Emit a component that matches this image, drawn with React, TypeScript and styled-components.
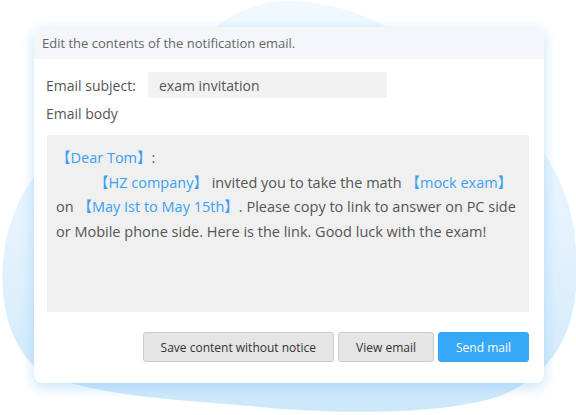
import React from 'react';
import styled, { createGlobalStyle } from 'styled-components';

const GlobalStyle = createGlobalStyle`
  html, body {
    margin: 0;
    padding: 0;
    background: #ffffff;
  }
  body {
    font-family: "Open Sans", "Noto Sans CJK SC", sans-serif;
  }
`

const Stage = styled.div`
  position: relative;
  width: 576px;
  height: 415px;
  overflow: hidden;
  padding: 27px 0 0 34px;
  box-sizing: border-box;
`

const Blob = styled.svg`
  position: absolute;
  left: 0;
  top: 0;
  z-index: 0;
`

const Card = styled.div`
  position: relative;
  z-index: 1;
  width: 510px;
  height: 356px;
  background: #ffffff;
  border-radius: 8px;
  box-shadow: 0 4px 14px rgba(110, 185, 245, 0.4);
  display: flex;
  flex-direction: column;
  overflow: hidden;
`

const Header = styled.div`
  height: 32px;
  display: flex;
  align-items: center;
  padding-left: 8px;
  background: #f4f6f9;
  color: #666666;
  font-size: 13px;
`

const Content = styled.div`
  display: flex;
  flex-direction: column;
  padding: 13px 15px 0 12px;
`

const Row = styled.div`
  display: flex;
  align-items: center;
  height: 26px;
`

const Label = styled.span`
  color: #555555;
  font-size: 14px;
  width: 102px;
`

const SubjectBox = styled.div`
  width: 239px;
  height: 26px;
  box-sizing: border-box;
  padding-left: 11px;
  display: flex;
  align-items: center;
  background: #f2f2f2;
  border-radius: 2px;
  color: #555555;
  font-size: 14px;
`

const BodyLabel = styled(Row)`
  margin-top: 2px;
  color: #555555;
  font-size: 14px;
`

const BodyBox = styled.div`
  margin: 9px 0 0 1px;
  height: 177px;
  box-sizing: border-box;
  padding: 11px 8px 0 9px;
  background: #f0f0f0;
  color: #555555;
  font-size: 14.5px;
  line-height: 24.7px;
`

const Line = styled.div<{ $indent?: number }>`
  white-space: nowrap;
  padding-left: ${(p) => p.$indent || 0}px;
`

const Mark = styled.span`
  color: #3a9ff0;
`

const Actions = styled.div`
  display: flex;
  justify-content: flex-end;
  gap: 4px;
  margin-top: 20px;
`

const Button = styled.button<{ $primary?: boolean }>`
  height: 30px;
  padding: 0 17px;
  border-radius: 3px;
  font-family: inherit;
  font-size: 12px;
  cursor: pointer;
  border: 1px solid ${(p) => (p.$primary ? '#35a8f7' : '#cccccc')};
  background: ${(p) => (p.$primary ? '#35a8f7' : '#e5e5e5')};
  color: ${(p) => (p.$primary ? '#ffffff' : '#333333')};
`

export default function App() {
  return (
    <>
      <GlobalStyle />
      <Stage>
        <Blob width="576" height="415" viewBox="0 0 576 415">
          <defs>
            <linearGradient id="blobFill" x1="0" y1="0" x2="0" y2="1">
              <stop offset="0" stopColor="#f1f9ff" />
              <stop offset="0.6" stopColor="#e3f2fd" />
              <stop offset="1" stopColor="#cde8fb" />
            </linearGradient>
          </defs>
          <path
            fill="url(#blobFill)"
            d="M287 1 C330 1 370 15 400 35 C470 80 560 130 574 230 C586 320 560 372 500 396 C440 416 330 414 250 406 C150 398 60 392 30 362 C-5 322 -5 250 20 200 C60 120 150 90 200 40 C230 12 260 1 287 1 Z"
          />
        </Blob>
        <Card>
          <Header>Edit the contents of the notification email.</Header>
          <Content>
            <Row>
              <Label>Email subject:</Label>
              <SubjectBox>exam invitation</SubjectBox>
            </Row>
            <BodyLabel>Email body</BodyLabel>
            <BodyBox>
              <Line>
                <Mark>【Dear Tom】</Mark>:
              </Line>
              <Line $indent={38}>
                <Mark>【HZ company】</Mark> invited you to take the math <Mark>【mock exam】</Mark>
              </Line>
              <Line>
                on <Mark>【May Ist to May 15th】</Mark>. Please copy to link to answer on PC side
              </Line>
              <Line>or Mobile phone side. Here is the link. Good luck with the exam!</Line>
            </BodyBox>
            <Actions>
              <Button>Save content without notice</Button>
              <Button>View email</Button>
              <Button $primary>Send mail</Button>
            </Actions>
          </Content>
        </Card>
      </Stage>
    </>
  );
}
